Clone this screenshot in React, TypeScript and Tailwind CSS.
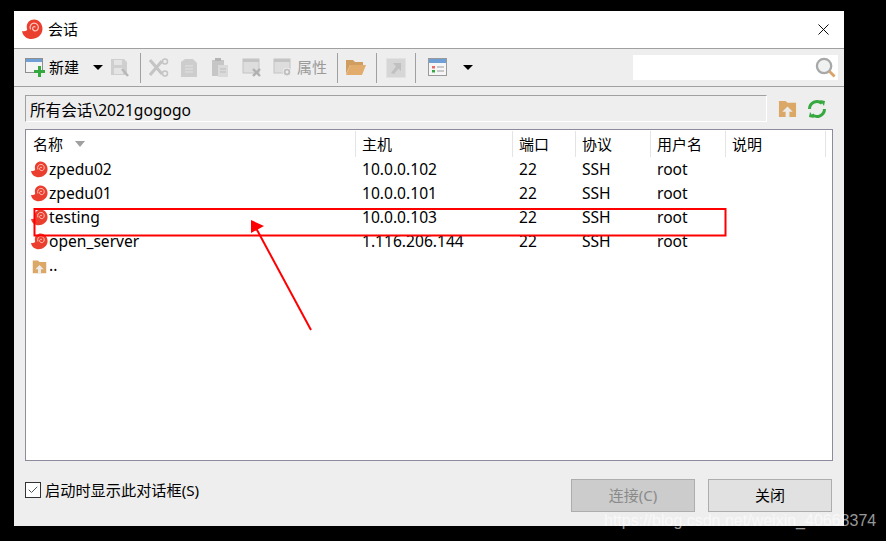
import React from 'react';
import { Check, X } from 'lucide-react';

const font = { fontFamily: '"Noto Sans", "Noto Sans CJK SC", sans-serif' };

const Snail = ({ size = 18 }: { size?: number }) => (
  <svg width={size} height={size} viewBox="0 0 20 20" className="block shrink-0">
    <path d="M0 11.5c0.5 3.5 3 7 7.5 7.5 6 0.6 11.5 -3 12 -9 0.4 -5 -3.3 -9.5 -8 -9.5 -4 0 -7 3 -7 7 0 1 0.2 2 0.5 3 -1.5 1.2 -3.2 1.6 -5 1z" fill="#ea3f2e" />
    <path d="M8 9.5c-1 -3 1 -5.5 3.6 -5.5 2.4 0 4.2 2 4 4.2 -0.2 2.2 -2 3.5 -3.6 3.1 -1.5 -0.4 -2.2 -1.7 -1.8 -2.8 0.4 -1 1.5 -1.5 2.3 -1" fill="none" stroke="#ffc9c0" strokeWidth="1.1" strokeLinecap="round" />
  </svg>
);

const UpFolder = ({ size = 20 }: { size?: number }) => (
  <svg width={size} height={size} viewBox="0 0 20 20" className="block shrink-0">
    <path d="M1 2h7l2 2h9v15H1z" fill="#dba868" />
    <path d="M10 8l5.5 5.5H12V20H8v-6.5H4.5z" fill="#ececec" />
  </svg>
);

const NewIcon = () => (
  <svg width="21" height="20" viewBox="0 0 21 20" className="block shrink-0">
    <rect x="0.5" y="0.5" width="17" height="14" fill="#f4f4f4" stroke="#8f8f8f" />
    <rect x="1" y="1" width="16" height="3" fill="#6f9fd4" />
    <path d="M13 8h3v4h4v3h-4v4h-3v-4H9v-3h4z" fill="#35a83f" />
  </svg>
);

const SaveIcon = () => (
  <svg width="20" height="20" viewBox="0 0 20 20" className="block shrink-0">
    <path d="M1 1h13l3 3v13H1z" fill="#cfcfcf" />
    <rect x="4" y="2" width="8" height="5" fill="#e4e4e4" />
    <rect x="4" y="10" width="9" height="6" fill="#e4e4e4" />
    <path d="M12 11l6 7" stroke="#b8b8b8" strokeWidth="2.5" />
  </svg>
);

const CutIcon = () => (
  <svg width="20" height="20" viewBox="0 0 20 20" className="block shrink-0">
    <path d="M1 2l12 14M1 17L13 3" stroke="#c4c4c4" strokeWidth="3" />
    <circle cx="16" cy="3.5" r="2.5" fill="none" stroke="#c4c4c4" strokeWidth="1.5" />
    <circle cx="16" cy="15.5" r="2.5" fill="none" stroke="#c4c4c4" strokeWidth="1.5" />
  </svg>
);

const CopyIcon = () => (
  <svg width="18" height="20" viewBox="0 0 18 20" className="block shrink-0">
    <path d="M5 1h8l4 4v14H1V4z" fill="#cdcdcd" />
    <path d="M5 8h8M5 11h8M5 14h8" stroke="#e2e2e2" strokeWidth="1" />
  </svg>
);

const PasteIcon = () => (
  <svg width="18" height="20" viewBox="0 0 18 20" className="block shrink-0">
    <rect x="1" y="2" width="12" height="16" fill="#c6c6c6" />
    <rect x="4" y="0" width="6" height="3" fill="#b4b4b4" />
    <rect x="7" y="7" width="10" height="12" fill="#dadada" />
    <path d="M9 11h6M9 14h6" stroke="#bdbdbd" />
  </svg>
);

const DeleteIcon = () => (
  <svg width="20" height="20" viewBox="0 0 20 20" className="block shrink-0">
    <rect x="1" y="1" width="16" height="14" fill="#dddddd" stroke="#c4c4c4" />
    <rect x="1" y="1" width="16" height="3" fill="#c4c4c4" />
    <path d="M11 11l7 7M18 11l-7 7" stroke="#b0b0b0" strokeWidth="2.4" />
  </svg>
);

const PropsIcon = () => (
  <svg width="20" height="20" viewBox="0 0 20 20" className="block shrink-0">
    <rect x="1" y="1" width="16" height="14" fill="#dddddd" stroke="#c4c4c4" />
    <rect x="1" y="1" width="16" height="3" fill="#c4c4c4" />
    <circle cx="14" cy="14" r="4" fill="#c0c0c0" stroke="#eeeeee" strokeWidth="1" />
    <circle cx="14" cy="14" r="1.4" fill="#eeeeee" />
  </svg>
);

const FolderIcon = () => (
  <svg width="20" height="18" viewBox="0 0 20 18" className="block shrink-0">
    <path d="M0 1h7l2 2h8v3H4L0 15z" fill="#cf9d60" />
    <path d="M4 6h16l-4 10H0z" fill="#e2ad6c" />
  </svg>
);

const LinkIcon = () => (
  <svg width="20" height="20" viewBox="0 0 20 20" className="block shrink-0">
    <rect x="0.5" y="0.5" width="19" height="19" fill="#d6d6d6" stroke="#e2e2e2" />
    <path d="M7 5h8v8l-2.5 -2.5L8 16l-3 -1 5 -6.5z" fill="#c0c0c0" />
  </svg>
);

const ViewIcon = () => (
  <svg width="20" height="19" viewBox="0 0 20 19" className="block shrink-0">
    <rect x="0.5" y="0.5" width="18" height="17" fill="#f6f6f6" stroke="#9a9a9a" />
    <rect x="1" y="1" width="17" height="4" fill="#6f9fd4" />
    <rect x="4" y="8" width="3" height="2.5" fill="#e86a6a" />
    <rect x="4" y="12" width="3" height="2.5" fill="#35a83f" />
    <path d="M9 9h7M9 13h7" stroke="#9a9a9a" />
  </svg>
);

const Caret = () => <span className="block h-0 w-0 shrink-0 border-x-[5px] border-t-[5px] border-x-transparent border-t-black" />;

const Sep = () => <span className="block h-[30px] w-px shrink-0 bg-[#a0a0a0]" />;

const columns = [
  { label: '名称', width: 'w-[330px]' },
  { label: '主机', width: 'w-[157px]' },
  { label: '端口', width: 'w-[63px]' },
  { label: '协议', width: 'w-[75px]' },
  { label: '用户名', width: 'w-[75px]' },
  { label: '说明', width: 'w-[100px]' },
];

const sessions = [
  { name: 'zpedu02', host: '10.0.0.102', port: '22', proto: 'SSH', user: 'root' },
  { name: 'zpedu01', host: '10.0.0.101', port: '22', proto: 'SSH', user: 'root' },
  { name: 'testing', host: '10.0.0.103', port: '22', proto: 'SSH', user: 'root' },
  { name: 'open_server', host: '1.116.206.144', port: '22', proto: 'SSH', user: 'root' },
];

const App = () => {
  return (
    <div className="relative h-[541px] w-[886px] overflow-hidden bg-black pl-[14px] pt-[11px] text-[15.6px] text-black" style={font}>
      <div className="flex h-[515px] w-[830px] flex-col bg-[#eeeeee]">
        {/* Title bar */}
        <div className="flex h-[37px] shrink-0 items-center bg-white pl-[8px] pr-[11px]">
          <Snail size={21} />
          <span className="ml-[5px] text-[15px]">会话</span>
          <X className="ml-auto h-[19px] w-[19px]" strokeWidth={1.2} />
        </div>
        <div className="h-px shrink-0 bg-[#a0a0a0]" />

        {/* Toolbar */}
        <div className="flex h-[37px] shrink-0 items-center pl-[11px] pr-[6px]">
          <NewIcon />
          <span className="ml-[3px] text-[15px]">新建</span>
          <span className="ml-[14px]"><Caret /></span>
          <span className="ml-[7px]"><SaveIcon /></span>
          <span className="ml-[10px]"><Sep /></span>
          <span className="ml-[8px]"><CutIcon /></span>
          <span className="ml-[11px]"><CopyIcon /></span>
          <span className="ml-[13px]"><PasteIcon /></span>
          <span className="ml-[13px]"><DeleteIcon /></span>
          <span className="ml-[11px]"><PropsIcon /></span>
          <span className="ml-[4px] text-[15px] text-[#9a9a9a]">属性</span>
          <span className="ml-[10px]"><Sep /></span>
          <span className="ml-[8px]"><FolderIcon /></span>
          <span className="ml-[10px]"><Sep /></span>
          <span className="ml-[9px]"><LinkIcon /></span>
          <span className="ml-[9px]"><Sep /></span>
          <span className="ml-[12px]"><ViewIcon /></span>
          <span className="ml-[15px]"><Caret /></span>
          <div className="ml-auto flex h-[25px] w-[205px] items-center justify-end bg-white pr-[2px]">
            <svg width="21" height="21" viewBox="0 0 22 22" className="block">
              <circle cx="9.5" cy="9.5" r="7.5" fill="#f0f2f2" stroke="#a8a8a8" strokeWidth="2.4" />
              <path d="M15 15l5.5 5.5" stroke="#d9a36a" strokeWidth="3" />
            </svg>
          </div>
        </div>
        <div className="h-px shrink-0 bg-[#a0a0a0]" />

        {/* Path */}
        <div className="mt-[8px] flex h-[27px] shrink-0 items-center pl-[11px]">
          <div className="flex h-[27px] w-[742px] items-center border border-b-white border-l-[#a0a0a0] border-r-white border-t-[#a0a0a0] pl-[4px] pt-[5px]">
            <span className="leading-none">所有会话\2021gogogo</span>
          </div>
          <span className="ml-[11px]"><UpFolder size={19} /></span>
          <svg width="20" height="20" viewBox="0 0 20 20" className="ml-[10px] block shrink-0">
            <path d="M2.5 10a7.5 7.5 0 0 1 12.5 -5.5" fill="none" stroke="#35a83f" strokeWidth="3" />
            <path d="M17.5 10a7.5 7.5 0 0 1 -12.5 5.5" fill="none" stroke="#35a83f" strokeWidth="3" />
            <path d="M13 1l5 1 -1 5z" fill="#35a83f" />
            <path d="M7 19l-5 -1 1 -5z" fill="#35a83f" />
          </svg>
        </div>

        {/* Session list */}
        <div className="ml-[11px] mt-[7px] h-[332px] w-[808px] shrink-0 border border-[#8c8c9c] bg-white">
          <div className="flex h-[28px] items-start">
            {columns.map((col, i) => (
              <div key={col.label} className={`mt-[1px] flex h-[26px] items-center border-r border-[#e4e4e4] ${col.width} ${i === 0 ? 'pl-[7px]' : 'pl-[6px]'}`}>
                <span className="text-[15px] leading-none">{col.label}</span>
                {i === 0 && <span className="ml-[12px] block h-0 w-0 border-x-[5px] border-t-[6px] border-x-transparent border-t-[#a0a0a0]" />}
              </div>
            ))}
          </div>
          {sessions.map((s) => (
            <div key={s.name} className="flex h-[24px] items-center">
              <div className="flex w-[330px] items-center pl-[5px]">
                <Snail size={17} />
                <span className="ml-[1px]">{s.name}</span>
              </div>
              <div className="w-[157px] pl-[6px]">{s.host}</div>
              <div className="w-[63px] pl-[6px]">{s.port}</div>
              <div className="w-[75px] pl-[6px]">{s.proto}</div>
              <div className="w-[75px] pl-[6px]">{s.user}</div>
            </div>
          ))}
          <div className="flex h-[24px] items-center pl-[6px]">
            <UpFolder size={15} />
            <span className="ml-[2px]">..</span>
          </div>
        </div>

        {/* Footer */}
        <div className="ml-[11px] mt-[18px] flex w-[807px] items-start">
          <div className="flex items-center">
            <span className="flex h-[16px] w-[16px] items-center justify-center border border-[#333333] bg-white">
              <Check className="h-[12px] w-[12px] text-[#555555]" strokeWidth={2} />
            </span>
            <span className="ml-[4px] text-[15.2px]">启动时显示此对话框(S)</span>
          </div>
          <button className="ml-auto flex h-[33px] w-[124px] items-center justify-center border border-[#adadad] bg-[#cccccc] text-[15px] text-[#8a8a8a]">连接(C)</button>
          <button className="ml-[13px] flex h-[33px] w-[124px] items-center justify-center border border-[#adadad] bg-[#e1e1e1] text-[15px]">关闭</button>
        </div>
      </div>

      {/* Red annotations drawn over the screenshot */}
      <svg width="886" height="541" className="pointer-events-none absolute left-0 top-0">
        <rect x="34.5" y="209" width="691" height="26.5" fill="none" stroke="#ff0000" strokeWidth="2" />
        <path d="M311 330L256 228" stroke="#ff0000" strokeWidth="2" />
        <path d="M251 220l13 6 -13 7z" fill="#ff0000" />
      </svg>

      {/* Watermark */}
      <span className="absolute left-[604px] top-[513px] text-[16px] leading-none text-white/60" style={{ fontFamily: '"Liberation Sans", sans-serif' }}>
        https://blog.csdn.net/weixin_40668374
      </span>
    </div>
  );
};

export default App;
